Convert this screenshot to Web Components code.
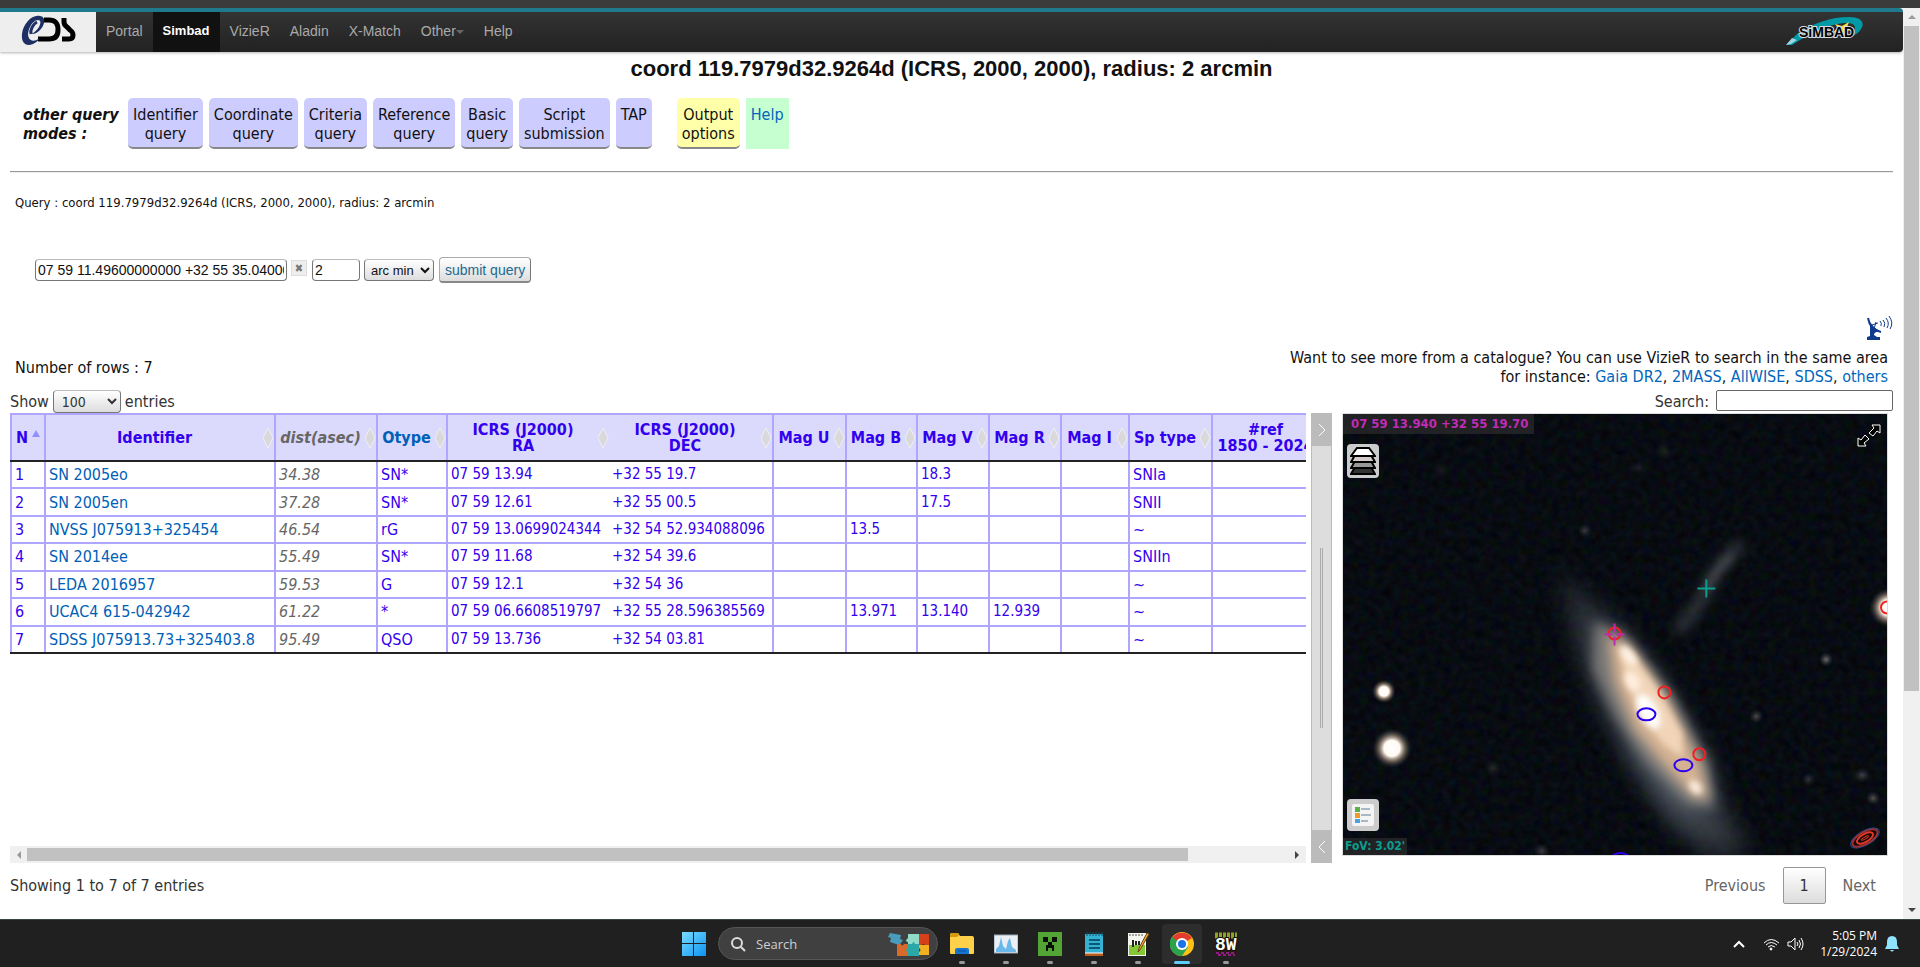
<!DOCTYPE html>
<html lang="en">
<head>
<meta charset="utf-8">
<title>coord 119.7979d32.9264d (ICRS, 2000, 2000), radius: 2 arcmin</title>
<style>
  html, body { margin: 0; height: 100%; }
  body {
    font-family: "DejaVu Sans Condensed", "DejaVu Sans", "Noto Sans", sans-serif;
    font-size: 16px;
    line-height: 19px;
    font-stretch: condensed;
    color: #111;
    background: #fff;
    overflow: hidden;
  }
</style>
</head>
<body>
<simbad-app></simbad-app>

<script>
const UI_FONT = '"DejaVu Sans Condensed", "DejaVu Sans", "Noto Sans", sans-serif';
const ARIAL = '"Liberation Sans", Arial, sans-serif';

// Shared helper: fill an open shadow root with styles and markup
class BaseElement extends HTMLElement {
  constructor() {
    super();
    this.attachShadow({ mode: "open" });
  }

  connectedCallback() {
    this.shadowRoot.innerHTML = `<style>* { box-sizing: border-box; } ${this.styles()}</style>${this.markup()}`;
  }

  styles() { return ""; }
  markup() { return ""; }
}

class CdsNav extends BaseElement {
  styles() {
    return `
      :host {
        display: flex;
        height: 44px;
        border-top: 4px solid #1f7a8c;
        border-radius: 0 4px 4px 0;
        background: linear-gradient(#333, #222);
        box-shadow: 0 1px 3px rgba(0, 0, 0, .3);
        font: 14px/38px ${ARIAL};
      }
      .logo { width: 96px; background: #eee; padding: 2px 0 0 20px; }
      nav { display: flex; flex: 1; }
      nav a { padding: 0 10px; color: #aaa; text-decoration: none; }
      nav a.active { color: #fff; background: #111; font-weight: bold; font-size: 13px; }
      .caret {
        display: inline-block;
        border: 4px solid transparent;
        border-top-color: #666;
        border-bottom: 0;
        vertical-align: middle;
      }
      .simbad { padding: 2px 40px 0 0; }
      svg { display: block; }
    `;
  }

  markup() {
    const items = ["Portal", "Simbad", "VizieR", "Aladin", "X-Match", "Other", "Help"];
    return `
      <div class="logo">
        <svg width="58" height="34" viewBox="0 0 58 34">
          <g fill="none" stroke="#000" stroke-width="5">
            <path d="M24 6h5c7 0 9 4 9 10s-3 9-9 9H18"/>
            <path d="M44 4v4q0 3 3 5l3 3q3 2 3 5 0 4-4 4h-7"/>
          </g>
          <path d="M20 2C12 0 3 10 2 20c-1 9 4 13 11 10 4-2 6-4 7-6-4 3-9 4-11 0-3-6 3-18 9-18 3 0 3 3 1 7-2 3-5 6-8 7 6 1 12-6 13-11 1-4-1-7-4-7z" fill="#1d2f63"/>
          <path d="M17 8c-4 2-7 8-6 12" fill="none" stroke="#1d2f63" stroke-width="3"/>
        </svg>
      </div>
      <nav>
        ${items.map((t) => `<a href="#"${t === "Simbad" ? ' class="active"' : ""}>${t}${t === "Other" ? '<i class="caret"></i>' : ""}</a>`).join("")}
      </nav>
      <a class="simbad" href="#" aria-label="Simbad home">
        <svg width="78" height="36" viewBox="0 0 78 36">
          <path d="M1 31L12 20C28 9 46 3 64 3c13 0 16 6 12 12-3 5-9 8-16 9 8-4 12-9 9-13-4-4-20-2-34 5-12 5-22 11-28 15z" fill="#009aa6"/>
          <path d="M1 31l6-7 5 2-6 4z" fill="#9fd4e4"/>
          <path d="M64 8l-2 5 5 3-6 1-2 7-4-6-8 1 6-5-3-4 7 2z" fill="#f6e04a"/>
          <text x="14" y="23" font-family="Liberation Sans" font-size="14" font-weight="bold" fill="#000" stroke="#ddd" stroke-width="2" paint-order="stroke">SiMBAD</text>
        </svg>
      </a>
    `;
  }
}
customElements.define("cds-nav", CdsNav);

class QueryModes extends BaseElement {
  styles() {
    return `
      :host { display: flex; gap: 6px; align-items: stretch; padding-left: 13px; }
      strong { width: 99px; font-style: italic; padding-top: 7px; }
      button, a {
        font: 16px/19px ${UI_FONT};
        font-stretch: condensed;
        color: #111;
        padding: 7px 5px;
        text-align: center;
        display: flex;
        align-items: flex-start;
        text-decoration: none;
      }
      button {
        border: 0;
        border-bottom: 2px solid #888;
        border-radius: 5px;
        background: #ccf;
        padding-bottom: 4px;
      }
      button.output { background: #ffa; margin-left: 19px; }
      a { background: #c6ffd0; color: #06b; }
    `;
  }

  markup() {
    const modes = ["Identifier<br>query", "Coordinate<br>query", "Criteria<br>query", "Reference<br>query", "Basic<br>query", "Script<br>submission", "TAP"];
    return `
      <strong>other query modes :</strong>
      ${modes.map((m) => `<button type="button"><span>${m}</span></button>`).join("")}
      <button type="button" class="output"><span>Output<br>options</span></button>
      <a href="#">Help</a>
    `;
  }
}
customElements.define("query-modes", QueryModes);

class QueryForm extends BaseElement {
  styles() {
    return `
      :host { display: block; padding-left: 25px; }
      form { display: flex; gap: 4px; align-items: center; height: 28px; }
      input, select {
        font: 14px/18px ${ARIAL};
        height: 22px;
        padding: 0 2px;
        border: 1px solid #777;
        border-top-color: #bbb;
        border-radius: 4px;
        background: #fff;
        color: #111;
      }
      .coord { width: 252px; }
      .radius { width: 48px; }
      select { width: 70px; font-size: 13px; background: linear-gradient(#fff, #ddd); }
      .clear {
        width: 16px;
        height: 16px;
        padding: 0;
        border: 1px solid #ddd;
        background: #eee;
        color: #777;
        font: 11px/13px ${UI_FONT};
        margin-right: 1px;
        align-self: flex-start;
        margin-top: 4px;
      }
      .submit {
        height: 26px;
        padding: 0 5px;
        border: 1px solid #aaa;
        border-bottom: 2px solid #888;
        border-right-color: #777;
        border-radius: 4px;
        background: linear-gradient(#fff, #ddd);
        color: #1b6a92;
        font: 14px/20px ${ARIAL};
        margin-left: 1px;
      }
    `;
  }

  markup() {
    return `
      <form onsubmit="return false">
        <input class="coord" type="text" aria-label="Coordinates" value="07 59 11.49600000000 +32 55 35.04000000000">
        <button class="clear" type="button" aria-label="Clear">✖</button>
        <input class="radius" type="text" aria-label="Radius" value="2">
        <select aria-label="Radius unit"><option>arc min</option><option>arc sec</option></select>
        <button class="submit">submit query</button>
      </form>
    `;
  }
}
customElements.define("query-form", QueryForm);

class CatalogueInfo extends BaseElement {
  styles() {
    return `
      :host { display: grid; grid-template-columns: 1fr auto; align-items: end; padding: 0 5px; }
      .right { text-align: right; }
      a { color: #06b; text-decoration: none; }
      svg { grid-column: 2; justify-self: end; display: block; margin: 0 -5px 7px 0; }
      .rows { align-self: center; }
    `;
  }

  markup() {
    const cats = ["Gaia DR2", "2MASS", "AllWISE", "SDSS", "others"];
    return `
      <svg width="27" height="26" viewBox="0 0 27 26">
        <path d="M2 3l2 4 4 5 7 5h-5l-2 2v1l3 2h3v3H1v-3l3-1V10z" fill="#123a8c"/>
        <path d="M2 3q2 12 13 14" stroke="#123a8c" stroke-width="2" fill="none"/>
        <path d="M8 14l2-7M6 10l6-2" stroke="#123a8c" fill="none"/>
        <path d="M14 6q2 2 1 5M17 5q3 3 1 7M20 3q4 5 1 10M23 1q5 7 1 13" fill="none" stroke="#123a8c"/>
      </svg>
      <div class="rows">Number of rows : 7</div>
      <div class="right">Want to see more from a catalogue? You can use VizieR to search in the same area<br>
        for instance: ${cats.map((c) => `<a href="#">${c}</a>`).join(", ")}</div>
    `;
  }
}
customElements.define("catalogue-info", CatalogueInfo);

class TableControls extends BaseElement {
  styles() {
    return `
      :host { display: flex; justify-content: space-between; align-items: flex-end; color: #333; }
      label { display: flex; align-items: center; gap: 4px; }
      select {
        width: 68px;
        height: 23px;
        padding: 0 4px;
        border: 1px solid #777;
        border-top-color: #bbb;
        border-radius: 4px;
        background: linear-gradient(#fff, #ddd);
        font: 14px/18px ${UI_FONT};
        font-stretch: condensed;
        color: #333;
      }
      .search { gap: 7px; }
      input { width: 177px; height: 21px; border: 1px solid #666; border-radius: 2px; margin-bottom: 2px; }
    `;
  }

  markup() {
    return `
      <label>Show <select><option>100</option><option>50</option></select> entries</label>
      <label class="search">Search: <input type="search"></label>
    `;
  }
}
customElements.define("table-controls", TableControls);

class ResultsTable extends BaseElement {
  styles() {
    return `
      :host { display: block; overflow: hidden; flex: 1; }
      table {
        table-layout: fixed;
        width: 1308px;
        height: 241px;
        border-collapse: collapse;
        border-bottom: 2px solid #222;
        color: #3300ee;
      }
      th, td { border: 2px solid #aea6ff; white-space: nowrap; }
      th {
        height: 47px;
        padding: 0;
        background: #dcdafc;
        font-size: 16px;
        line-height: 16px;
        border-bottom: 2px solid #222;
      }
      th div { display: flex; align-items: center; }
      th span { flex: 1; text-align: center; }
      th svg { flex: none; }
      td { height: 27px; padding: 0 3px; line-height: 19px; }
      tr:last-child td { border-bottom-color: #222; }
      a { color: #0060b8; text-decoration: none; }
      .dist { color: #666; font-style: italic; }
      td.num { font-size: 15px; }
      .ra { border-right: 0; }
      .dec { border-left: 0; }
    `;
  }

  markup() {
    const widths = [34, 230, 102, 70, 162, 164, 73, 71, 72, 72, 68, 83, 107];
    const heads = ["N", "Identifier", "dist(asec)", '<a href="#">Otype</a>', "ICRS (J2000)<br>RA", "ICRS (J2000)<br>DEC", "Mag U", "Mag B", "Mag V", "Mag R", "Mag I", "Sp type", "#ref<br>1850 - 2024"];
    const rows = [
      ["1", "SN 2005eo", "34.38", "SN*", "07 59 13.94", "+32 55 19.7", "", "", "18.3", "", "", "SNIa", ""],
      ["2", "SN 2005en", "37.28", "SN*", "07 59 12.61", "+32 55 00.5", "", "", "17.5", "", "", "SNII", ""],
      ["3", "NVSS J075913+325454", "46.54", "rG", "07 59 13.0699024344", "+32 54 52.934088096", "", "13.5", "", "", "", "~", ""],
      ["4", "SN 2014ee", "55.49", "SN*", "07 59 11.68", "+32 54 39.6", "", "", "", "", "", "SNIIn", ""],
      ["5", "LEDA 2016957", "59.53", "G", "07 59 12.1", "+32 54 36", "", "", "", "", "", "~", ""],
      ["6", "UCAC4 615-042942", "61.22", "*", "07 59 06.6608519797", "+32 55 28.596385569", "", "13.971", "13.140", "12.939", "", "~", ""],
      ["7", "SDSS J075913.73+325403.8", "95.49", "QSO", "07 59 13.736", "+32 54 03.81", "", "", "", "", "", "~", ""],
    ];
    const cls = { 2: "dist", 4: "num ra", 5: "num dec", 6: "num", 7: "num", 8: "num", 9: "num", 10: "num" };
    const attr = (i) => (cls[i] ? ` class="${cls[i]}"` : "");
    const sortBoth = '<svg width="11" height="20" viewBox="0 0 11 20"><path d="M5 0l5 10-5 10-5-10z" fill="#d9d9dc" stroke="#eee"/></svg>';
    const sortAsc = '<svg width="12" height="18" viewBox="0 0 12 18"><path d="M4 1l4 7H0z" fill="#8f8fff"/></svg>';
    return `
      <table>
        <colgroup>${widths.map((w) => `<col style="width:${w}px">`).join("")}</colgroup>
        <thead><tr>${heads.map((h, i) => `<th${attr(i)}><div><span>${h}</span>${i === 0 ? sortAsc : i === 12 ? "" : sortBoth}</div></th>`).join("")}</tr></thead>
        <tbody>${rows.map((r) => `<tr>${r.map((c, i) => `<td${attr(i)}>${i === 1 ? `<a href="#">${c}</a>` : c}</td>`).join("")}</tr>`).join("")}</tbody>
      </table>
    `;
  }
}
customElements.define("results-table", ResultsTable);

class ScrollTrack extends BaseElement {
  styles() {
    return `
      :host { display: flex; background: #f0f0f0; width: 17px; flex-direction: column; align-items: center; padding: 4px 0; flex: none; }
      :host([horizontal]) { width: auto; height: 17px; flex-direction: row; padding: 0 4px; }
      .rail { flex: 1; align-self: stretch; margin: 4px 1px; }
      .thumb { background: #c1c1c1; height: 76%; width: 100%; }
      :host([horizontal]) .rail { margin: 2px 3px; }
      :host([horizontal]) .thumb { height: 100%; width: 92%; }
      svg { display: block; flex: none; }
    `;
  }

  markup() {
    const horizontal = this.hasAttribute("horizontal");
    const first = horizontal ? "M7 1v8L3 5z" : "M1 7h8L5 3z";
    const last = horizontal ? "M3 1v8l4-4z" : "M1 3h8L5 7z";
    const arrow = (d, fill) => `<svg width="10" height="10"><path d="${d}" fill="${fill}"/></svg>`;
    return `${arrow(first, "#999")}<div class="rail"><div class="thumb"></div></div>${arrow(last, "#444")}`;
  }
}
customElements.define("scroll-track", ScrollTrack);

class PaneSplitter extends BaseElement {
  styles() {
    return `
      :host { display: flex; flex-direction: column; background: #ddd; border: solid #bbb; border-width: 0 1px; align-items: center; }
      button { width: 100%; height: 33px; border: 0; padding: 0; background: #bbb; display: flex; align-items: center; justify-content: center; }
      .grip { flex: 1; display: flex; align-items: center; }
      .grip i { width: 3px; height: 180px; border: solid #aaa; border-width: 0 1px; }
    `;
  }

  markup() {
    const chevron = (d) => `<svg width="10" height="14"><path d="${d}" fill="none" stroke="#fff" stroke-width="1"/></svg>`;
    return `
      <button type="button" aria-label="Collapse right">${chevron("M2 1l6 6-6 6")}</button>
      <div class="grip"><i></i></div>
      <button type="button" aria-label="Collapse left">${chevron("M8 1L2 7l6 6")}</button>
    `;
  }
}
customElements.define("pane-splitter", PaneSplitter);

class SkyViewer extends BaseElement {
  styles() {
    return `
      :host { display: block; position: relative; height: 443px; border: 1px solid #ddd; background: #070a10; overflow: hidden; }
      .sky { display: block; width: 100%; height: 100%; }
      .label { position: absolute; left: 0; font: bold 13px/20px ${UI_FONT}; font-stretch: condensed; background: rgba(50, 50, 50, .6); }
      .coords { top: 0; padding: 0 6px 0 8px; color: #c02bb6; }
      .fov { bottom: 0; padding: 0 2px; color: #0a9e8e; line-height: 17px; font-size: 12px; }
      button { position: absolute; padding: 0; border: 0; background: none; }
      button svg { display: block; }
      .tool { left: 4px; width: 32px; height: 34px; border-radius: 4px; background: #ccc; display: flex; align-items: center; justify-content: center; }
      .layers { top: 30px; }
      .legend { bottom: 24px; height: 32px; }
      .full { right: 6px; top: 10px; }
      .aladin { position: absolute; right: 5px; bottom: 5px; }
    `;
  }

  markup() {
    const faint = [[242, 117, 5, .22], [484, 246, 5, .45], [414, 303, 5, .3], [466, 366, 5, .2], [520, 362, 6, .25], [531, 385, 5, .35], [150, 355, 7, .12], [199, 438, 6, .22], [296, 54, 6, .1], [322, 38, 7, .1], [99, 56, 6, .08]];
    const red = [[272, 220], [322, 279], [357, 341], [545, 194]];
    const blue = [[304, 301], [341, 352], [278, 446]];
    return `
      <svg class="sky" viewBox="0 0 545 442" preserveAspectRatio="xMidYMid slice" color-interpolation-filters="sRGB">
        <defs>
          <radialGradient id="star">
            <stop offset="0" stop-color="#fff"/>
            <stop offset=".4" stop-color="#fffaf2"/>
            <stop offset=".65" stop-color="#b39a85" stop-opacity=".6"/>
            <stop offset="1" stop-color="#26303c" stop-opacity="0"/>
          </radialGradient>
          <radialGradient id="dim">
            <stop offset="0" stop-color="#cbb9ae"/>
            <stop offset="1" stop-color="#5f6a78" stop-opacity="0"/>
          </radialGradient>
          <linearGradient id="haze" x1="210" y1="150" x2="400" y2="444" gradientUnits="userSpaceOnUse">
            <stop offset="0" stop-color="#4c5258" stop-opacity=".3"/>
            <stop offset=".3" stop-color="#545c66" stop-opacity=".7"/>
            <stop offset=".75" stop-color="#58616c" stop-opacity=".85"/>
            <stop offset="1" stop-color="#4c5258" stop-opacity=".4"/>
          </linearGradient>
          <filter id="b3" x="-100%" y="-100%" width="300%" height="300%"><feGaussianBlur stdDeviation="3"/></filter>
          <filter id="b6" x="-100%" y="-100%" width="300%" height="300%"><feGaussianBlur stdDeviation="6"/></filter>
          <filter id="b11" x="-100%" y="-100%" width="300%" height="300%"><feGaussianBlur stdDeviation="11"/></filter>
          <filter id="grain">
            <feTurbulence type="fractalNoise" baseFrequency=".12" numOctaves="3" seed="4"/>
            <feColorMatrix values=".08 0 0 0 -.01  0 .09 0 0 0  0 0 .13 0 .003  0 0 0 0 1"/>
          </filter>
        </defs>
        <rect width="545" height="442" fill="#090c12"/>
        <rect width="545" height="442" filter="url(#grain)"/>
        <!-- companion streak -->
        <path d="M396 134Q376 150 366 172T338 214" stroke="#4c5258" stroke-width="13" stroke-linecap="round" fill="none" opacity=".55" filter="url(#b6)"/>
        <path d="M390 142Q372 158 364 176" stroke="#6d6f72" stroke-width="9" fill="none" opacity=".3" filter="url(#b3)"/>
        <!-- galaxy, outer haze to inner bar -->
        <path d="M214 150L242 182L276 212L320 268L366 348L378 390L412 444L366 444L330 410L288 350L258 290L236 232z" fill="url(#haze)" filter="url(#b11)"/>
        <path d="M252 208L282 220L330 282L366 350L372 394L346 392L302 348L272 302L250 256z" fill="#85827f" opacity=".85" filter="url(#b6)"/>
        <path d="M266 222L286 232L326 288L358 352L366 386L350 382L320 350L292 316L272 268z" fill="#dfb996" opacity=".9" filter="url(#b6)"/>
        <path d="M276 234L290 240L316 276L340 320L340 344L322 332L298 302L284 266z" fill="#f5d9bd" opacity=".9" filter="url(#b3)"/>
        <ellipse cx="286" cy="242" rx="5" ry="12" transform="rotate(-36 286 242)" fill="#fff3e6" filter="url(#b3)"/>
        <ellipse cx="306" cy="298" rx="9" ry="19" transform="rotate(-28 306 298)" fill="#fff" filter="url(#b3)"/>
        <ellipse cx="290" cy="268" rx="7" ry="11" transform="rotate(-28 290 268)" fill="#ffeedd" filter="url(#b3)"/>
        <ellipse cx="353" cy="374" rx="5" ry="8" transform="rotate(-40 353 374)" fill="#fff1e4" filter="url(#b3)"/>
        <circle cx="41" cy="278" r="12" fill="url(#star)"/>
        <circle cx="49" cy="335" r="20" fill="url(#star)"/>
        <circle cx="547" cy="194" r="20" fill="url(#star)"/>
        ${faint.map(([x, y, r, o]) => `<circle cx="${x}" cy="${y}" r="${r + 2}" fill="url(#dim)" opacity="${o * 1.2}"/>`).join("")}
        <g fill="none" stroke-width="2">
          ${red.map(([x, y]) => `<circle cx="${x}" cy="${y}" r="6" stroke="#f22020"/>`).join("")}
          ${blue.map(([x, y]) => `<ellipse cx="${x}" cy="${y}" rx="9" ry="6" stroke="#2a00f0"/>`).join("")}
          <path d="M355 175h18M364 166v18" stroke="#0a9e8e"/>
          <path d="M262 221h8M274 221h8M272 210v9M272 223v9" stroke="#c02bb6"/>
        </g>
      </svg>
      <span class="label coords">07 59 13.940 +32 55 19.70</span>
      <button class="tool layers" type="button" aria-label="Manage layers">
        <svg width="26" height="28" viewBox="0 0 26 28" stroke="#000" stroke-width="2">
          <path d="M5 20h16l4 7H1z" fill="#333"/>
          <path d="M5 14h16l4 7H1z" fill="#999"/>
          <path d="M5 8h16l4 7H1z" fill="#d5caca"/>
          <path d="M7 1h12l6 8H1z" fill="#fff"/>
        </svg>
      </button>
      <button class="full" type="button" aria-label="Full screen">
        <svg width="24" height="24" viewBox="0 0 24 24" fill="#000" stroke="#fff">
          <path d="M15 1h8v8l-3-2-4 5-4-3 5-5z"/>
          <path d="M9 22H1v-8l3 2 4-5 4 4-5 4z"/>
        </svg>
      </button>
      <button class="tool legend" type="button" aria-label="Legend">
        <svg width="22" height="22" viewBox="0 0 22 22">
          <rect width="22" height="22" rx="2" fill="#f4f4f4"/>
          <path d="M3 3h5v5H3z" fill="#5cb04a"/><path d="M3 9h5v5H3z" fill="#f09a28"/><path d="M3 15h5v4H3z" fill="#4aa3df"/>
          <path d="M9 5h9M9 11h10M9 17h7" stroke="#5a7a98"/>
        </svg>
      </button>
      <span class="label fov">FoV: 3.02'</span>
      <svg class="aladin" width="34" height="24" viewBox="0 0 34 24" fill="none">
        <g transform="rotate(-30 17 12)">
          <ellipse cx="17" cy="12" rx="16" ry="7" fill="#180808" stroke="#1d4f9e"/>
          <ellipse cx="17" cy="12" rx="14" ry="6" stroke="#a03030" stroke-width="2"/>
          <ellipse cx="17" cy="12" rx="9" ry="4" stroke="#e03828" stroke-width="2"/>
          <ellipse cx="17" cy="12" rx="4" ry="1" stroke="#e03828"/>
        </g>
      </svg>
    `;
  }
}
customElements.define("sky-viewer", SkyViewer);

class TablePager extends BaseElement {
  styles() {
    return `
      :host { display: flex; align-items: center; color: #333; }
      .info { flex: 1; }
      button {
        font: 16px/19px ${UI_FONT};
        font-stretch: condensed;
        height: 37px;
        border: 0;
        background: none;
        color: #666;
        padding: 0 17px;
      }
      .current { width: 43px; padding: 0; border: 1px solid #979797; border-radius: 2px; background: linear-gradient(#fff, #dcdcdc); color: #333; }
    `;
  }

  markup() {
    return `
      <span class="info">Showing 1 to 7 of 7 entries</span>
      <button type="button">Previous</button>
      <button type="button" class="current">1</button>
      <button type="button">Next</button>
    `;
  }
}
customElements.define("table-pager", TablePager);

class TaskBar extends BaseElement {
  styles() {
    return `
      :host {
        display: grid;
        grid-template-columns: 1fr auto 1fr;
        align-items: center;
        height: 48px;
        flex: none;
        background: #202020;
        border-top: 1px solid #3c4440;
        color: #fff;
        font: 12px/16px "Open Sans", "Noto Sans", sans-serif;
      }
      svg { display: block; flex: none; }
      .apps { grid-column: 2; display: flex; align-items: center; gap: 4px; }
      .apps button { width: 40px; height: 40px; border: 0; border-radius: 4px; background: none; padding: 0 8px; position: relative; }
      .apps button.open::after { content: ""; position: absolute; left: 17px; bottom: 0; width: 6px; height: 3px; border-radius: 2px; background: #999; }
      .apps button.focus { background: #2d2d2d; }
      .apps button.focus::after { left: 12px; width: 16px; background: #60cdff; }
      .search {
        display: flex;
        align-items: center;
        gap: 10px;
        width: 220px;
        height: 33px;
        padding: 0 7px 0 11px;
        border: 1px solid #555;
        border-radius: 17px;
        background: #404040;
      }
      input { flex: 1; min-width: 0; border: 0; background: none; outline: 0; color: #ddd; font: 13px/18px "Open Sans", "Noto Sans", sans-serif; padding: 0; }
      input::placeholder { color: #d0d0d0; }
      .tray { display: flex; justify-content: flex-end; align-items: center; padding-right: 21px; }
      .clock { text-align: right; margin: 0 8px 0 16px; }
      .wifi { margin-left: 18px; margin-right: 7px; }
    `;
  }

  markup() {
    const icons = [
      // name and 24px artwork, left to right
      ["File Explorer", `<path d="M0 3q0-2 2-2h6l2 3h12q2 0 2 2v15q0 1-1 1H1q-1 0-1-1z" fill="#ffd04a"/><path d="M0 3q0-2 2-2h6l1 2-2 2H0z" fill="#d49a0c"/><path d="M5 22v-4q0-2 2-2h10q2 0 2 2v4z" fill="#1677d2"/><path d="M8 19h8" stroke="#0a4f9e"/>`],
      ["Task Manager", `<path d="M0 3h24v18H0z" fill="#e9eff5" stroke="#9aa7b4"/><path d="M2 17l3-3 2-9 2 9 3 3 2-8 2-3 2 9 4 3v2H2z" fill="#6bb8ea"/>`],
      ["Minecraft", `<path d="M0 0h24v24H0z" fill="#52a535"/><path d="M5 5h5v5H5zM14 5h5v5h-5zM10 10h4v3h2v6h-2v-3h-4v3H8v-6h2z" fill="#080f06"/>`],
      ["Notepad", `<path d="M3 2h18v19H3z" fill="#35b1d2"/><path d="M3 21h18v3H3z" fill="#b65c1c"/><path d="M3 21h18" stroke="#fff"/><path d="M5 0v4M8 0v4M11 0v4M14 0v4M17 0v4M20 0v4" stroke="#0d536b"/><path d="M7 8h11M7 12h11M7 16h11" stroke="#0b5875" stroke-width="2"/>`],
      ["Notepad++", `<path d="M2 1h18v23H2z" fill="#f5f5ef"/><path d="M3 13h16v10H3z" fill="#84c83a"/><path d="M7 8v7M10 9v4M13 9v4" stroke="#222" stroke-width="2"/><path d="M3 3h15" stroke="#555" stroke-dasharray="2 1"/><path d="M23 2l-9 16-2 2 1-4 8-15z" fill="#f0aa30" stroke="#6a4310" stroke-width="1"/>`],
      ["Chrome", `<circle cx="12" cy="12" r="12" fill="#fbc116"/><path d="M12 12L2 6a12 12 0 0 1 20 0z" fill="#e33b2e"/><path d="M2 5a12 12 0 0 0 10 19l6-9-6-3z" fill="#2ba24c"/><circle cx="12" cy="12" r="6" fill="#fff"/><circle cx="12" cy="12" r="4" fill="#1a73e8"/>`],
      ["BW", `<rect width="24" height="24" rx="4" fill="#2b1a18"/><path d="M1 2h22M1 5h22" stroke="#87a624" stroke-width="3" stroke-dasharray="3 1"/><path d="M2 21h20M4 23h17" stroke="#8c1d86" stroke-width="2" stroke-dasharray="3 2"/><text x="1" y="18" font-family="Liberation Mono" font-size="18" font-weight="bold" fill="#fff" stroke="#111" stroke-width="2" paint-order="stroke">8W</text>`],
    ];
    return `
      <div class="apps">
        <button type="button" aria-label="Start">
          <svg width="24" height="24"><defs><linearGradient id="w" x2="1" y2="1"><stop stop-color="#7adcff"/><stop offset="1" stop-color="#0a92f0"/></linearGradient></defs>
          <path d="M0 0h11v11H0zM12 0h12v11H12zM0 12h11v12H0zM12 12h12v12H12z" fill="url(#w)"/></svg>
        </button>
        <label class="search">
          <svg width="16" height="16" fill="none" stroke="#ddd" stroke-width="2"><circle cx="7" cy="7" r="5"/><path d="M11 11l4 4"/></svg>
          <input type="text" placeholder="Search" aria-label="Search">
          <svg width="42" height="24" viewBox="0 0 42 24">
            <path d="M2 1l11 2-1 4 3 1-2 3-2 2-9-3 1-4-3-1z" fill="#4a9cbc"/>
            <path d="M9 12h4q1 3 3 0h4v12H9z" fill="#d86a2c"/>
            <path d="M20 2h11v11H20v-3q-4-1 0-4z" fill="#8fdcc8"/>
            <path d="M31 2h10v11h-4q-2-3-3 0h-3z" fill="#d8401a"/>
            <path d="M20 12h4q2-4 3 0h4v12H20v-4q-4-2 0-4z" fill="#2aa8a8"/>
            <path d="M31 13h10v10H31v-3q3-2 0-4z" fill="#f2b020"/>
          </svg>
        </label>
        ${icons.map(([name, art]) => `<button type="button" class="open${name === "Chrome" ? " focus" : ""}" aria-label="${name}"><svg width="24" height="24" viewBox="0 0 24 24">${art}</svg></button>`).join("")}
      </div>
      <div class="tray">
        <svg width="12" height="8" fill="none" stroke="#fff" stroke-width="2"><path d="M1 7l5-5 5 5"/></svg>
        <svg class="wifi" width="17" height="14" fill="none" stroke="#fff"><path d="M1 6q7-7 15 0M3 8q5-5 11 0M5 10q3-3 7 0" stroke-width="1"/><circle cx="8" cy="12" r="1" fill="#fff"/></svg>
        <svg width="17" height="14" fill="none" stroke="#fff"><path d="M1 5h3l4-4v12L4 9H1z"/><path d="M10 5q2 2 0 4M12 3q3 4 0 8M14 1q4 6 0 12"/></svg>
        <div class="clock">5:05 PM<br>1/29/2024</div>
        <svg width="14" height="16" fill="#90e4ff"><path d="M7 0q5 0 5 6v3l2 4H0l2-4V6q0-6 5-6zM5 14h4q-2 3-4 0z"/></svg>
      </div>
    `;
  }
}
customElements.define("task-bar", TaskBar);

class SimbadApp extends BaseElement {
  styles() {
    return `
      :host { display: flex; flex-direction: column; height: 100vh; }
      .chrome { height: 8px; background: #3b3b3b; flex: none; }
      .window { flex: 1; display: flex; min-height: 0; }
      .page { flex: 1; min-width: 0; overflow: hidden; }
      h1 { font: bold 22px/26px ${ARIAL}; text-align: center; margin: 4px 0 16px; color: #111; }
      main { padding: 0 10px; }
      hr { margin: 22px 0 20px; border: 0; height: 2px; background: linear-gradient(#999 50%, #eee 50%); }
      .query { margin: 0 5px 44px; font-size: 13px; }
      catalogue-info { margin: 31px 0 4px; }
      .results { display: grid; grid-template-columns: minmax(0, 1fr) 21px 556px; align-items: start; margin-right: 5px; }
      .pane { display: flex; flex-direction: column; height: 450px; margin-right: 5px; }
      pane-splitter { align-self: stretch; }
      sky-viewer { margin-left: 10px; }
      table-pager { margin-top: 4px; }
    `;
  }

  markup() {
    return `
      <div class="chrome"></div>
      <div class="window">
        <div class="page">
          <cds-nav></cds-nav>
          <h1>coord 119.7979d32.9264d (ICRS, 2000, 2000), radius: 2 arcmin</h1>
          <main>
            <query-modes></query-modes>
            <hr>
            <p class="query">Query : coord 119.7979d32.9264d (ICRS, 2000, 2000), radius: 2 arcmin</p>
            <query-form></query-form>
            <catalogue-info></catalogue-info>
            <table-controls></table-controls>
            <section class="results">
              <div class="pane">
                <results-table></results-table>
                <scroll-track horizontal></scroll-track>
              </div>
              <pane-splitter></pane-splitter>
              <sky-viewer></sky-viewer>
            </section>
            <table-pager></table-pager>
          </main>
        </div>
        <scroll-track></scroll-track>
      </div>
      <task-bar></task-bar>
    `;
  }
}
customElements.define("simbad-app", SimbadApp);
</script>
</body>
</html>
